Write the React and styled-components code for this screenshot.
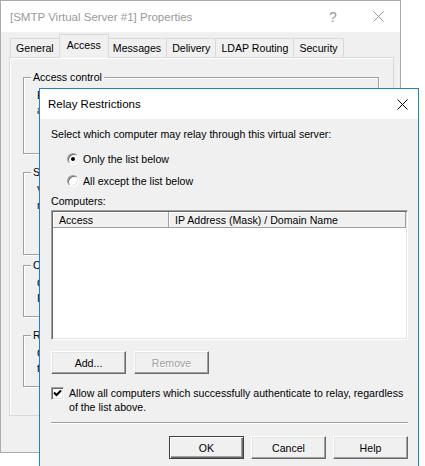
import React from "react"
import styled, { createGlobalStyle, css } from "styled-components"

const GlobalStyle = createGlobalStyle`
  body {
    margin: 0;
    background: #ffffff;
    font-family: "Liberation Sans", Arial, sans-serif;
    font-size: 10.6px;
    color: #000000;
  }
`

const Desktop = styled.div`
  position: relative;
  width: 425px;
  height: 466px;
  overflow: hidden;
  background: #ffffff;
`

/* ---------- shared window chrome ---------- */

const Window = styled.div`
  position: absolute;
  left: ${({ left }) => left}px;
  top: ${({ top }) => top}px;
  width: ${({ width }) => width}px;
  height: ${({ height }) => height}px;
  box-sizing: border-box;
  border: 1px solid ${({ active }) => (active ? "#1883d7" : "#aaaaaa")};
  background: #f0f0f0;
  display: flex;
  flex-direction: column;
`

const TitleBar = styled.div`
  height: ${({ h }) => h}px;
  flex-shrink: 0;
  background: #ffffff;
  display: flex;
  align-items: center;
  padding-left: ${({ pad }) => pad}px;
  padding-right: ${({ padRight }) => padRight || 0}px;
  font-size: 11.5px;
  color: ${({ active }) => (active ? "#000000" : "#999999")};
`

const TitleText = styled.span`
  flex: 1;
`

const TitleGlyph = styled.span`
  width: ${({ w }) => w}px;
  margin-left: ${({ ml }) => ml || 0}px;
  display: flex;
  justify-content: center;
  align-items: center;
  font-size: 14px;
  color: ${({ active }) => (active ? "#000000" : "#999999")};
`

const CloseIcon = ({ color }) => (
  <svg width="11" height="11" viewBox="0 0 11 11">
    <path d="M0.5 0.5 L10.5 10.5 M10.5 0.5 L0.5 10.5" stroke={color} strokeWidth="1" />
  </svg>
)

/* ---------- properties window (behind) ---------- */

const TabStrip = styled.div`
  display: flex;
  align-items: flex-end;
  height: 24px;
  padding-left: 9px;
  margin-top: 1px;
`

const Tab = styled.div`
  height: 19px;
  box-sizing: border-box;
  padding: 0 5px;
  border: 1px solid #d9d9d9;
  border-bottom: none;
  border-left-width: ${({ first }) => (first ? 1 : 0)}px;
  background: #f0f0f0;
  display: flex;
  align-items: center;
  white-space: nowrap;
  position: relative;
  ${({ selected }) =>
    selected &&
    css`
      z-index: 1;
      height: 24px;
      margin: 0 -1px -1px -1px;
      padding: 0 7px 3px;
      border-left-width: 1px;
      background: #f0f0f0;
    `}
`

const TabPanel = styled.div`
  margin: 0 0 0 8px;
  width: 385px;
  height: 359px;
  box-sizing: border-box;
  border: 1px solid #d9d9d9;
  box-shadow: inset 1px 1px 0 #ffffff;
  display: flex;
  flex-direction: column;
  padding: 0 14px 0 13px;
`

const GroupBox = styled.div`
  position: relative;
  margin-top: ${({ mt }) => mt}px;
  height: ${({ h }) => h}px;
  box-sizing: border-box;
  border: 1px solid #a0a0a0;
  box-shadow: 1px 1px 0 #ffffff, inset 1px 1px 0 #ffffff;
  padding: 11px 10px 0 13px;
  display: flex;
  flex-direction: column;
  gap: 2px;
`

const GroupLabel = styled.span`
  position: absolute;
  top: -7px;
  left: 7px;
  padding: 0 2px;
  background: #f0f0f0;
  line-height: 13px;
`

const GroupText = styled.div`
  line-height: 13px;
  white-space: nowrap;
`

/* ---------- relay restrictions dialog ---------- */

const DialogBody = styled.div`
  display: flex;
  flex-direction: column;
  padding: 9px 10px 0 11px;
`

const Text = styled.div`
  line-height: 13px;
  white-space: nowrap;
  margin-top: ${({ mt }) => mt || 0}px;
`

const OptionRow = styled.label`
  display: flex;
  align-items: center;
  height: 13px;
  gap: 4px;
  padding-left: 16px;
  white-space: nowrap;
  margin-top: ${({ mt }) => mt}px;
`

const Radio = styled.span`
  width: 12px;
  height: 12px;
  box-sizing: border-box;
  border-radius: 50%;
  background: #ffffff;
  border: 1px solid;
  border-color: #a0a0a0 #ffffff #ffffff #a0a0a0;
  box-shadow: inset 1px 1px 0 #696969, inset -1px -1px 0 #e3e3e3;
  display: flex;
  align-items: center;
  justify-content: center;

  &::after {
    content: "";
    width: 4px;
    height: 4px;
    border-radius: 50%;
    background: ${({ checked }) => (checked ? "#000000" : "transparent")};
  }
`

const ListView = styled.div`
  margin-top: 2px;
  height: 130px;
  box-sizing: border-box;
  background: #ffffff;
  border: 1px solid;
  border-color: #a0a0a0 #ffffff #ffffff #a0a0a0;
  box-shadow: inset 1px 1px 0 #696969, inset -1px -1px 0 #e3e3e3;
  padding: 1px;
`

const ListHeader = styled.div`
  display: flex;
  height: 16px;
`

const HeaderCell = styled.div`
  width: ${({ w }) => (w ? `${w}px` : "auto")};
  flex: ${({ w }) => (w ? "none" : 1)};
  box-sizing: border-box;
  background: #f0f0f0;
  border-bottom: 1px solid #a0a0a0;
  border-right: 1px solid #a0a0a0;
  box-shadow: inset 1px 1px 0 #ffffff;
  padding-left: 6px;
  display: flex;
  align-items: center;
  white-space: nowrap;
  overflow: hidden;
`

const ButtonRow = styled.div`
  display: flex;
  gap: ${({ gap }) => gap}px;
  justify-content: ${({ end }) => (end ? "flex-end" : "flex-start")};
  margin-top: ${({ mt }) => mt}px;
`

const Button = styled.button`
  width: 75px;
  height: 23px;
  box-sizing: border-box;
  padding: 0;
  background: #f0f0f0;
  font-family: "Liberation Sans", Arial, sans-serif;
  font-size: 10.6px;
  color: #000000;
  border: 1px solid;
  border-color: #ffffff #696969 #696969 #ffffff;
  box-shadow: inset -1px -1px 0 #a0a0a0, inset 1px 1px 0 #e3e3e3;

  &:disabled {
    color: #a0a0a0;
    text-shadow: 1px 1px 0 #ffffff;
  }

  ${({ primary }) =>
    primary &&
    css`
      border-color: #404040;
      box-shadow: inset 1px 1px 0 #ffffff, inset -1px -1px 0 #696969,
        inset -2px -2px 0 #a0a0a0;
    `}
`

const CheckRow = styled.label`
  display: flex;
  align-items: flex-start;
  gap: 5px;
  margin-top: 12px;
`

const CheckBox = styled.span`
  flex-shrink: 0;
  width: 13px;
  height: 13px;
  margin-top: 1px;
  box-sizing: border-box;
  background: #ffffff;
  border: 1px solid;
  border-color: #a0a0a0 #ffffff #ffffff #a0a0a0;
  box-shadow: inset 1px 1px 0 #696969, inset -1px -1px 0 #e3e3e3;
  display: flex;
  align-items: center;
  justify-content: center;
`

const CheckText = styled.span`
  line-height: 14px;
  white-space: nowrap;
`

const Separator = styled.div`
  margin-top: 8px;
  height: 1px;
  background: #a0a0a0;
  border-bottom: 1px solid #ffffff;
`

const CheckMark = () => (
  <svg width="9" height="9" viewBox="0 0 9 9">
    <path d="M1 3.5 L3.5 6 L8 1.5" fill="none" stroke="#000" strokeWidth="2" />
  </svg>
)

export default function App() {
  return (
    <Desktop>
      <GlobalStyle />

      <Window left={0} top={0} width={401} height={453}>
        <TitleBar h={31} pad={9} padRight={7}>
          <TitleText>[SMTP Virtual Server #1] Properties</TitleText>
          <TitleGlyph w={22}>?</TitleGlyph>
          <TitleGlyph w={30} ml={19}>
            <CloseIcon color="#999999" />
          </TitleGlyph>
        </TitleBar>
        <TabStrip>
          <Tab first>General</Tab>
          <Tab selected>Access</Tab>
          <Tab>Messages</Tab>
          <Tab>Delivery</Tab>
          <Tab>LDAP Routing</Tab>
          <Tab>Security</Tab>
        </TabStrip>
        <TabPanel>
          <GroupBox mt={19} h={77}>
            <GroupLabel>Access control</GroupLabel>
            <GroupText>Enable anonymous access and edit the</GroupText>
            <GroupText>authentication methods for this resource.</GroupText>
          </GroupBox>
          <GroupBox mt={18} h={83}>
            <GroupLabel>Secure communication</GroupLabel>
            <GroupText>View or set the secure communications</GroupText>
            <GroupText>method used when this virtual server is</GroupText>
          </GroupBox>
          <GroupBox mt={10} h={52}>
            <GroupLabel>Connection control</GroupLabel>
            <GroupText>Grant or deny access to this resource using</GroupText>
            <GroupText>IP addresses or Internet domain names.</GroupText>
          </GroupBox>
          <GroupBox mt={18} h={52}>
            <GroupLabel>Relay restrictions</GroupLabel>
            <GroupText>Grant or deny permissions to relay e-mail</GroupText>
            <GroupText>through this SMTP virtual server.</GroupText>
          </GroupBox>
        </TabPanel>
      </Window>

      <Window active left={39} top={88} width={380} height={400}>
        <TitleBar active h={30} pad={8} padRight={1}>
          <TitleText>Relay Restrictions</TitleText>
          <TitleGlyph active w={30}>
            <CloseIcon color="#000000" />
          </TitleGlyph>
        </TitleBar>
        <DialogBody>
          <Text>Select which computer may relay through this virtual server:</Text>
          <OptionRow mt={11}>
            <Radio checked />
            Only the list below
          </OptionRow>
          <OptionRow mt={9}>
            <Radio />
            All except the list below
          </OptionRow>
          <Text mt={8}>Computers:</Text>
          <ListView>
            <ListHeader>
              <HeaderCell w={116}>Access</HeaderCell>
              <HeaderCell>IP Address (Mask) / Domain Name</HeaderCell>
            </ListHeader>
          </ListView>
          <ButtonRow gap={8} mt={11}>
            <Button>Add...</Button>
            <Button disabled>Remove</Button>
          </ButtonRow>
          <CheckRow>
            <CheckBox>
              <CheckMark />
            </CheckBox>
            <CheckText>
              Allow all computers which successfully authenticate to relay, regardless
              <br />
              of the list above.
            </CheckText>
          </CheckRow>
          <Separator />
          <ButtonRow end gap={7} mt={12}>
            <Button primary>OK</Button>
            <Button>Cancel</Button>
            <Button>Help</Button>
          </ButtonRow>
        </DialogBody>
      </Window>
    </Desktop>
  )
}
